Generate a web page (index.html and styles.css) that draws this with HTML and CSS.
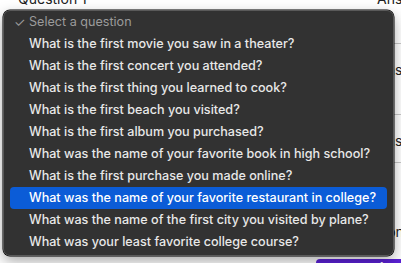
FILE: index.html
```html
<!DOCTYPE html>
<html>
<head>
<meta charset="utf-8">
<link rel="stylesheet" href="styles.css">
</head>
<body>
<div class="page">
  <div class="form">
    <div class="row">
      <div class="col q"><span class="label">Question 1</span></div>
      <div class="col a"><span class="label">Answer 1</span><div class="input"></div></div>
    </div>
    <div class="row">
      <div class="col q"></div>
      <div class="col a"><span class="label">Answer 2</span><div class="input"></div></div>
    </div>
    <div class="row third">
      <div class="col q"></div>
      <div class="col a"><span class="label">Answer 3</span><div class="input"></div></div>
    </div>
    <div class="row short">
      <div class="col q"></div>
      <div class="col a"><span class="label">Confirm</span></div>
    </div>
    <div class="actions"><button class="submit">Submit</button></div>
  </div>

  <div class="menu">
    <div class="item placeholder"><span class="check">✓</span>Select a question</div>
    <div class="item">What is the first movie you saw in a theater?</div>
    <div class="item">What is the first concert you attended?</div>
    <div class="item">What is the first thing you learned to cook?</div>
    <div class="item">What is the first beach you visited?</div>
    <div class="item">What is the first album you purchased?</div>
    <div class="item">What was the name of your favorite book in high school?</div>
    <div class="item">What is the first purchase you made online?</div>
    <div class="item active">What was the name of your favorite restaurant in college?</div>
    <div class="item">What was the name of the first city you visited by plane?</div>
    <div class="item">What was your least favorite college course?</div>
  </div>
</div>
</body>
</html>
```
FILE: styles.css
```css
html, body {
  margin: 0;
  padding: 0;
  background: #ffffff;
  overflow: hidden;
}
body {
  width: 401px;
  height: 263px;
  font-family: Inter, "Noto Sans", sans-serif;
}
.page {
  position: relative;
  width: 401px;
  height: 263px;
  overflow: hidden;
}
.form {
  display: flex;
  flex-direction: column;
  margin-top: -10px;
}
.row {
  display: grid;
  grid-template-columns: 377px 1fr;
  height: 71px;
}
.row.third { height: 91px; }
.row.third .input { margin-top: 12px; }
.row.short { height: 36px; }
.col { display: flex; flex-direction: column; }
.q { padding-left: 18px; }
.label {
  font-size: 14px;
  color: #222;
  line-height: 18px;
  white-space: nowrap;
}
.input {
  margin-top: 35px;
  height: 0;
  border-bottom: 1px solid #c8c8c8;
}
.actions {
  display: flex;
  justify-content: flex-end;
}
.submit {
  width: 85px;
  height: 30px;
  background: #5b21d6;
  color: #fff;
  border: none;
  border-radius: 4px 0 0 0;
  font-family: Inter, sans-serif;
  font-size: 15px;
  font-weight: 600;
  line-height: 15px;
  text-align: left;
  padding: 2px 0 0 22px;
  display: flex;
  align-items: flex-start;
}

.menu {
  position: absolute;
  left: 3px;
  top: 10px;
  box-sizing: border-box;
  width: 391px;
  height: 246px;
  padding: 0 6px 4px 6px;
  background: #323232;
  border: 1px solid #5a5a5a;
  border-radius: 7px;
  box-shadow: 0 0 0 0.5px #000, 0 5px 14px rgba(0,0,0,0.35);
  display: flex;
  flex-direction: column;
}
.item {
  position: relative;
  height: 22px;
  line-height: 22px;
  padding-left: 19px;
  font-size: 12.6px;
  font-weight: 500;
  color: #e8e8e8;
  white-space: nowrap;
  border-radius: 4px;
}
.item.placeholder { color: #9b9b9b; font-weight: 400; }
.check {
  position: absolute;
  left: 4px;
  top: 0;
  font-size: 13px;
  color: #9b9b9b;
}
.item.active {
  background: #0b5cd7;
  color: #ffffff;
}
```
